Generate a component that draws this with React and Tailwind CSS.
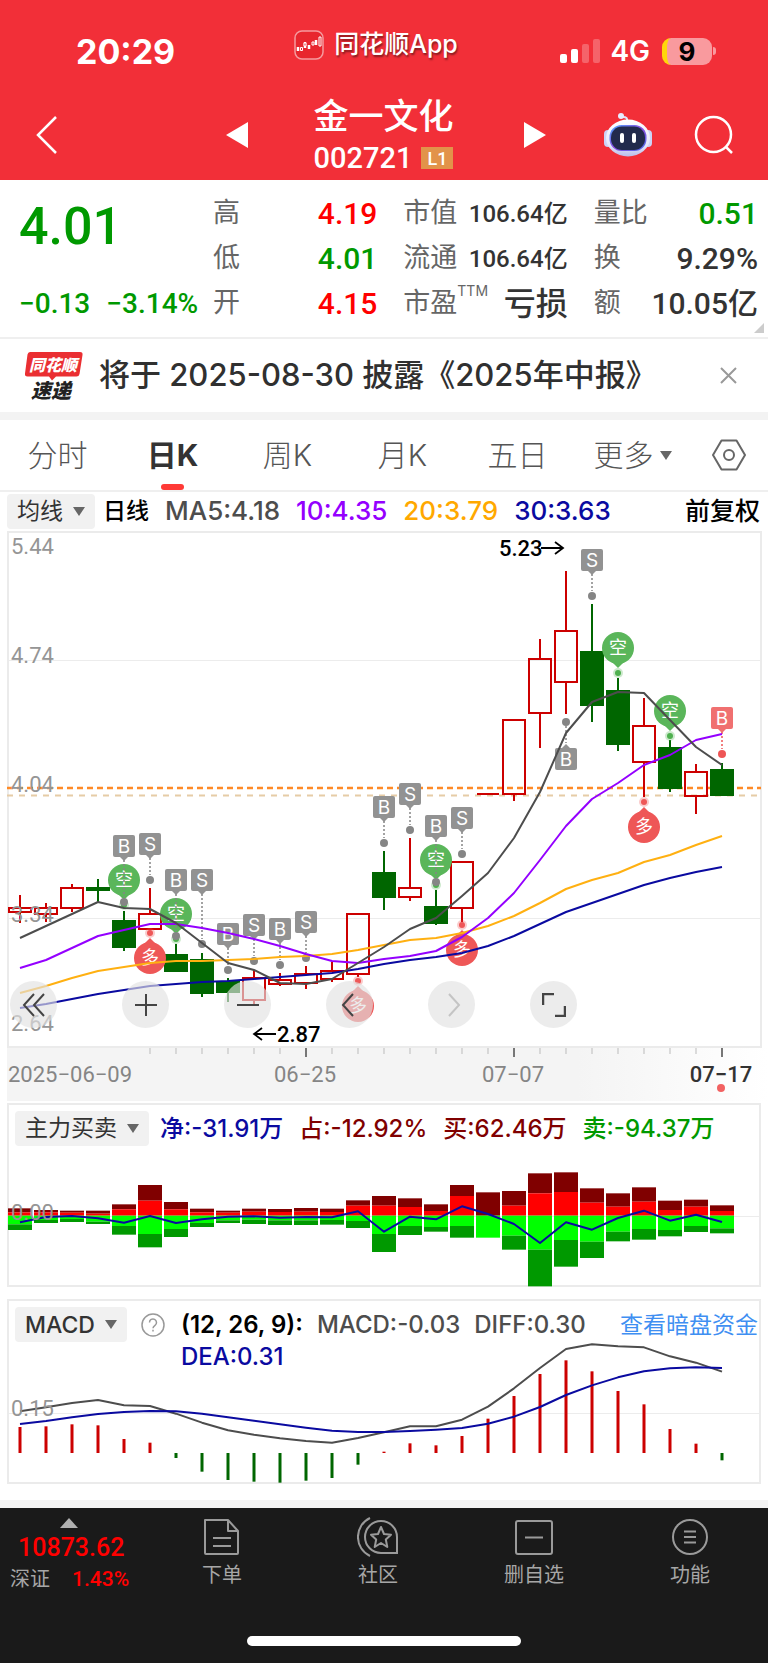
import React from "react";

const X0 = 20;
const STEP = 26;
const cx = (k) => X0 + STEP * k;

const RED = "#cc0000";
const GREEN = "#006600";

// [direction, body top, body bottom, wick top, wick bottom]
const CANDLES = [
  ["up", 908, 912, 895, 923],
  ["up", 908, 914, 903, 922],
  ["up", 888, 908, 884, 912],
  ["down", 887, 891, 879, 902],
  ["down", 920, 948, 911, 951],
  ["up", 914, 929, 888, 929],
  ["down", 954, 972, 944, 972],
  ["down", 959, 994, 953, 997],
  ["down", 981, 993, 978, 1002],
  ["up", 978, 1000, 970, 1005],
  ["up", 980, 984, 973, 986],
  ["up", 974, 983, 966, 989],
  ["up", 971, 979, 962, 982],
  ["up", 914, 974, 914, 977],
  ["down", 872, 898, 851, 910],
  ["up", 888, 897, 838, 901],
  ["down", 906, 924, 890, 925],
  ["up", 862, 908, 862, 922],
  ["flat", 794, 794, 794, 794],
  ["up", 720, 794, 720, 801],
  ["up", 659, 713, 639, 748],
  ["up", 631, 682, 571, 714],
  ["down", 651, 706, 604, 722],
  ["down", 690, 745, 678, 751],
  ["up", 726, 762, 698, 797],
  ["down", 747, 789, 740, 792],
  ["up", 772, 796, 764, 814],
  ["down", 769, 796, 763, 796],
];

const MA5 = [938, 926, 914, 902, 908, 909, 923, 943, 963, 970, 983, 984, 979, 963, 947, 929, 918, 896, 873, 838, 792, 733, 702, 692, 693, 720, 747, 765];
const MA10 = [968, 960, 948, 936, 930, 924, 924, 928, 933, 939, 946, 954, 961, 963, 959, 956, 951, 937, 918, 893, 860, 826, 799, 783, 765, 755, 740, 734];
const MA20 = [993, 986, 978, 971, 967, 963, 961, 961, 960, 959, 957, 956, 954, 950, 945, 940, 938, 933, 926, 916, 903, 889, 880, 873, 862, 855, 845, 836];
const MA30 = [1008, 1004, 999, 994, 990, 986, 984, 982, 981, 979, 977, 975, 973, 969, 964, 960, 957, 953, 946, 936, 924, 912, 903, 894, 885, 878, 872, 867];

// [index, letter, tag top, dot centre]
const TAGS = [
  [4, "B", 835, 902],
  [5, "S", 833, 880],
  [6, "B", 869, 936],
  [7, "S", 869, 944],
  [8, "B", 923, 970],
  [9, "S", 914, 961],
  [10, "B", 918, 965],
  [11, "S", 911, 958],
  [14, "B", 796, 843],
  [15, "S", 783, 830],
  [16, "B", 815, 882],
  [17, "S", 807, 854],
  [22, "S", 549, 596],
  [27, "B", 707, 754],
];
const SHORT_PINS = [[4, 880], [6, 914], [16, 860], [23, 648], [25, 711]];
const LONG_PINS = [[5, 958], [13, 1006], [17, 950], [24, 827]];

// bar edges and net value, in thirds of a pixel
const FLOW = [
  [340, 352, 388, 405, 382], [345, 352, 375, 384, 366], [347, 353, 372, 381, 363], [347, 356, 380, 387, 370],
  [328, 343, 393, 419, 383], [270, 317, 417, 457, 363], [321, 343, 402, 426, 384], [341, 352, 384, 396, 373],
  [347, 353, 376, 384, 365], [341, 350, 374, 387, 364], [342, 351, 376, 390, 368], [339, 350, 376, 390, 366],
  [341, 351, 375, 389, 367], [316, 332, 378, 399, 349], [303, 332, 417, 471, 410], [310, 336, 393, 420, 365],
  [328, 348, 396, 410, 373], [270, 303, 393, 428, 334], [292, 362, 428, 428, 357], [288, 332, 422, 464, 387],
  [235, 295, 464, 574, 444], [232, 291, 435, 515, 382], [280, 323, 440, 489, 404], [295, 335, 410, 439, 369],
  [277, 320, 402, 434, 347], [317, 345, 405, 424, 377], [314, 335, 393, 411, 359], [331, 348, 400, 415, 381],
];
const fy = (v) => 1095 + v / 3;

const MACD = [396, 394, 388, 391, 432, 443, 489, 530, 555, 560, 563, 557, 549, 509, 470, 445, 451, 423, 371, 303, 237, 196, 229, 288, 328, 402, 446, 496];
const DIFF = [349, 337, 324, 315, 331, 333, 356, 383, 406, 419, 430, 438, 443, 429, 412, 394, 394, 374, 335, 280, 219, 162, 148, 154, 157, 184, 203, 230];
const DEA = [387, 378, 367, 357, 351, 348, 349, 356, 367, 377, 388, 398, 407, 411, 411, 408, 404, 399, 386, 365, 336, 300, 271, 247, 229, 220, 217, 219];
const my = (v) => 1295 + v / 3;

const points = (ys) => ys.map((y, k) => `${cx(k)},${y}`).join(" ");

const NUM = "font-['Roboto','Noto_Sans_CJK_SC',sans-serif]";

function Line({ ys, color }) {
  return <polyline points={points(ys)} fill="none" stroke={color} strokeWidth="2" strokeLinejoin="round" />;
}

function Candle({ k, c }) {
  const [dir, top, bottom, high, low] = c;
  const x = cx(k);
  if (dir === "flat") return <path d={`M${x - 11} ${top}h22`} stroke={RED} strokeWidth="2" />;
  if (dir === "down")
    return (
      <g fill={GREEN}>
        <rect x={x - 1} y={high} width="2" height={low - high} />
        <rect x={x - 12} y={top} width="24" height={bottom - top} />
      </g>
    );
  return (
    <g stroke={RED} strokeWidth="2" fill="none">
      <path d={`M${x} ${high}V${top}M${x} ${bottom}V${low}`} />
      <rect x={x - 11} y={top} width="22" height={bottom - top} />
    </g>
  );
}

function Tag({ k, letter, top, dot }) {
  const x = cx(k);
  const hot = k === 27;
  const fill = hot ? "#f07070" : "#929292";
  const ink = hot ? "#ee5555" : "#858585";
  return (
    <g>
      <path d={`M${x} ${top + 25}V${dot - 5}`} stroke={ink} strokeWidth="1.5" strokeDasharray="2 2" />
      <circle cx={x} cy={dot} r="4" fill={ink} />
      <rect x={x - 11} y={top} width="22" height="22" rx="2" fill={fill} />
      <path d={`M${x - 4} ${top + 22}h8l-4 4z`} fill={fill} />
      <text x={x} y={top + 18} textAnchor="middle" fontSize="19" fill="#fff">{letter}</text>
    </g>
  );
}

function ShortPin({ k, y }) {
  const x = cx(k);
  return (
    <g>
      <circle cx={x} cy={y + 25} r="5" fill="#5ab65a" opacity="0.3" />
      <circle cx={x} cy={y + 25} r="3" fill="#4fb04f" />
      <circle cx={x} cy={y} r="16" fill="#5ab65a" />
      <path d={`M${x - 7} ${y + 13}h14l-7 7z`} fill="#5ab65a" />
      <text x={x} y={y + 6} textAnchor="middle" fontSize="18" fill="#fff">空</text>
    </g>
  );
}

function LongPin({ k, y }) {
  const x = cx(k);
  return (
    <g>
      <circle cx={x} cy={y - 25} r="5" fill="#ee5757" opacity="0.3" />
      <circle cx={x} cy={y - 25} r="3" fill="#ee5757" />
      <circle cx={x} cy={y} r="16" fill="#ee5757" />
      <path d={`M${x - 7} ${y - 13}h14l-7 -7z`} fill="#ee5757" />
      <text x={x} y={y + 6} textAnchor="middle" fontSize="18" fill="#fff">多</text>
    </g>
  );
}

function PriceChart() {
  return (
    <svg viewBox="0 530 768 571" className="block w-full font-['Inter','Noto_Sans_CJK_SC',sans-serif]" role="img" aria-label="日K线图">
      <defs>
        <linearGradient id="axis" x1="0" x2="1" y1="0" y2="0">
          <stop offset="0" stopColor="#f4f4f4" />
          <stop offset="0.75" stopColor="#f4f4f4" />
          <stop offset="1" stopColor="#ffffff" />
        </linearGradient>
      </defs>
      <rect x="7" y="1048" width="761" height="53" fill="url(#axis)" />
      <rect x="8" y="532" width="753" height="515" fill="#fff" stroke="#ebebeb" strokeWidth="2" />
      <path d="M9 660.500H760M9 918.500H760" stroke="#ececec" />
      <path d="M7 788H761" stroke="#ff8a26" strokeWidth="2.500" strokeDasharray="6 4" />
      <path d="M7 795.500H761" stroke="#e6cca6" strokeWidth="2" strokeDasharray="6 6" />
      {CANDLES.map((c, k) => <Candle key={k} k={k} c={c} />)}
      {SHORT_PINS.map(([k, y]) => <ShortPin key={k} k={k} y={y} />)}
      {LONG_PINS.map(([k, y]) => <LongPin key={k} k={k} y={y} />)}
      {TAGS.map(([k, letter, top, dot]) => <Tag key={k} k={k} letter={letter} top={top} dot={dot} />)}
      <g>
        <circle cx={cx(21)} cy="722" r="4" fill="#858585" />
        <path d={`M${cx(21)} 726V743`} stroke="#858585" strokeWidth="1.500" strokeDasharray="2 2" />
        <rect x={cx(21) - 11} y="748" width="22" height="22" rx="2" fill="#929292" />
        <path d={`M${cx(21) - 4} 748h8l-4 -4z`} fill="#929292" />
        <text x={cx(21)} y="766" textAnchor="middle" fontSize="19" fill="#fff">B</text>
      </g>
      <Line ys={MA30} color="#0a0aa0" />
      <Line ys={MA20} color="#ffb011" />
      <Line ys={MA10} color="#9400ff" />
      <Line ys={MA5} color="#4d4d4d" />
      <g className={NUM} fontSize="22" fill="#959595">
        <text x="11" y="554">5.44</text>
        <text x="11" y="663">4.74</text>
        <text x="11" y="792">4.04</text>
        <text x="11" y="922">3.34</text>
        <text x="11" y="1031">2.64</text>
      </g>
      <g className={NUM} fontSize="22" fontWeight="500" fill="#000">
        <text x="499" y="556">5.23</text>
        <text x="277" y="1042">2.87</text>
      </g>
      <path d="M541 548h21M555 542l8 6l-8 6M276 1034h-21M262 1028l-8 6l8 6" fill="none" stroke="#000" strokeWidth="1.800" />
      {CANDLES.map((_, k) =>
        k < 5 ? null : (
          <path
            key={k}
            d={`M${cx(k)} 1048v${k % 8 === 3 ? 9 : 6}`}
            stroke={k % 8 === 3 ? "#777" : "#bbb"}
            strokeWidth={k % 8 === 3 ? 2 : 1}
          />
        )
      )}
      <g className={NUM} fontSize="22" fill="#858585">
        <text x="8" y="1082">2025−06−09</text>
        <text x="305" y="1082" textAnchor="middle">06−25</text>
        <text x="513" y="1082" textAnchor="middle">07−07</text>
        <text x="721" y="1082" textAnchor="middle" fill="#333" fontWeight="500">07−17</text>
      </g>
      <circle cx="721" cy="1088" r="4" fill="#f26262" />
    </svg>
  );
}

function FlowChart() {
  return (
    <svg viewBox="9 1105 750 180" className="block w-full overflow-visible [grid-area:1/1]" role="img" aria-label="主力买卖图">
      <path d="M9 1216.500H759" stroke="#ececec" />
      {FLOW.map(([a, b, c, d], k) => (
        <g key={k}>
          <rect x={cx(k) - 12} y={fy(a)} width="24" height={(b - a) / 3} fill="#800000" />
          <rect x={cx(k) - 12} y={fy(b)} width="24" height={(362 - b) / 3} fill="#ff0000" />
          <rect x={cx(k) - 12} y={fy(362)} width="24" height={(c - 362) / 3} fill="#00ff00" />
          <rect x={cx(k) - 12} y={fy(c)} width="24" height={(d - c) / 3} fill="#009900" />
        </g>
      ))}
      <Line ys={FLOW.map((f) => fy(f[4]))} color="#0a0aa0" />
      <text x="11" y="1220" fontSize="22" fill="#959595" className={NUM}>0.00</text>
    </svg>
  );
}

function MacdChart() {
  return (
    <svg viewBox="9 1301 750 181" className="block w-full overflow-visible [grid-area:1/1]" role="img" aria-label="MACD图">
      <path d="M9 1413.500H759" stroke="#ececec" />
      {MACD.map((v, k) => (
        <rect
          key={k}
          x={cx(k) - 1.5}
          y={Math.min(my(v), my(474))}
          width="3"
          height={Math.max(1, Math.abs(v - 474) / 3)}
          fill={v > 474 ? GREEN : RED}
        />
      ))}
      <Line ys={DIFF.map(my)} color="#4d4d4d" />
      <Line ys={DEA.map(my)} color="#0a0aa0" />
      <text x="11" y="1416" fontSize="22" fill="#959595" className={NUM}>0.15</text>
    </svg>
  );
}

function Caret() {
  return (
    <svg width="12" height="9" viewBox="0 0 12 9" aria-hidden="true">
      <path d="M0 0h12l-6 9z" fill="#666" />
    </svg>
  );
}

function Pill({ children }) {
  return (
    <button className="flex h-[35px] shrink-0 items-center gap-[10px] whitespace-nowrap rounded bg-[#f1f1f1] px-[10px] text-[23px] text-[#333]">
      <span>{children}</span>
      <Caret />
    </button>
  );
}

function RoundButton({ label, muted, first, children }) {
  return (
    <button
      aria-label={label}
      className={
        "flex size-[47px] items-center justify-center rounded-full bg-[#e2e2e2]/65 " +
        (first ? "mr-[10px] " : "") +
        (muted ? "text-[#c4c4c4]" : "text-[#444]")
      }
    >
      <svg width="24" height="24" viewBox="0 0 24 24" fill="none" stroke="currentColor" strokeWidth="2">{children}</svg>
    </button>
  );
}

function Stat({ label, sup, value, tone, size }) {
  return (
    <div className="flex items-center justify-between whitespace-nowrap">
      <dt className="text-[27px] text-[#666]">
        {label}
        {sup && <sup className="-top-4 text-[14px]">{sup}</sup>}
      </dt>
      <dd className={`${NUM} ${tone} ${size} font-medium`}>{value}</dd>
    </div>
  );
}

function Robot() {
  return (
    <svg width="48" height="44" viewBox="0 0 48 44" aria-hidden="true">
      <defs>
        <linearGradient id="shell" x1="0" x2="0" y1="0" y2="1">
          <stop offset="0" stopColor="#ffffff" />
          <stop offset="0.700" stopColor="#e4e6fa" />
          <stop offset="1" stopColor="#b9bdea" />
        </linearGradient>
        <linearGradient id="rim" x1="0" x2="1" y1="0" y2="1">
          <stop offset="0" stopColor="#4aa8ff" />
          <stop offset="0.500" stopColor="#8a4be0" />
          <stop offset="1" stopColor="#4b6fe8" />
        </linearGradient>
      </defs>
      <path d="M23 9c1-4-1-5-4-5" fill="none" stroke="#dfe4fb" strokeWidth="2" />
      <circle cx="17" cy="3" r="3" fill="#e8ecff" />
      <rect x="0" y="17" width="8" height="17" rx="4" fill="#ccd2f6" />
      <rect x="40" y="17" width="8" height="17" rx="4" fill="#ccd2f6" />
      <ellipse cx="24" cy="25" rx="22" ry="18.500" fill="url(#shell)" />
      <rect x="5.500" y="12" width="37" height="26" rx="12" fill="url(#rim)" />
      <rect x="7" y="13.500" width="34" height="23.500" rx="11" fill="#222a4c" />
      <rect x="16" y="20" width="4" height="10" rx="2" fill="#fff" />
      <rect x="28" y="20" width="4" height="10" rx="2" fill="#fff" />
    </svg>
  );
}

function NavItem({ label, children }) {
  return (
    <button className="flex flex-col items-center gap-[4px] pt-[9px] text-[20px] leading-7 text-[#a6a6a6]">
      <svg width="42" height="40" viewBox="0 0 42 40" fill="none" stroke="#9a9a9a" strokeWidth="2" aria-hidden="true">{children}</svg>
      <span>{label}</span>
    </button>
  );
}

const TABS = ["分时", "日K", "周K", "月K", "五日", "更多"];

export default function App() {
  return (
    <div className="w-full bg-white font-['Inter','Noto_Sans_CJK_SC',sans-serif]">
      <header className="bg-[#f22f38] text-white">
        <div className="grid h-[90px] grid-cols-3 items-center pt-[12px]">
          <span className="pl-[76px] text-[34px] font-bold">20:29</span>
          <div className="flex items-center justify-center gap-[10px] pb-[12px] pr-[16px]">
            <svg width="30" height="30" viewBox="0 0 30 30" aria-hidden="true">
              <rect x="1" y="1" width="28" height="28" rx="7" fill="#e8262e" stroke="#f59a9e" strokeWidth="1.500" />
              <path d="M4 17v4M11 12v6M15 15v4M22 10v5" stroke="#fff" strokeWidth="2.500" />
              <path d="M6.500 17.500h2v3h-2zM10 13h2v3h-2zM18 12h2v3h-2zM25 7h2v9h-2z" fill="#e8262e" stroke="#fff" strokeWidth="1" />
            </svg>
            <span className="whitespace-nowrap text-[25px] font-medium [text-shadow:1px_2px_2px_rgba(0,0,0,0.45)]">同花顺App</span>
          </div>
          <div className="flex items-center justify-end pr-[52px]">
            <svg width="40" height="26" viewBox="0 0 40 26" fill="#fff" aria-hidden="true">
              <rect x="0" y="16" width="7" height="9" rx="2" />
              <rect x="11" y="11" width="7" height="14" rx="2" />
              <rect x="22" y="6" width="7" height="19" rx="2" opacity="0.250" />
              <rect x="33" y="1" width="7" height="24" rx="2" opacity="0.250" />
            </svg>
            <span className="ml-[10px] mr-[12px] text-[28px] font-semibold">4G</span>
            <span className="flex h-[27px] w-[50px] items-center justify-center rounded-[9px] border-l-[5px] border-[#ffd60a] bg-[#f99a9e] pr-[5px] text-[26px] font-bold leading-[27px] text-black">9</span>
            <span className="ml-px h-2 w-[3px] rounded-r bg-[#f99a9e]" />
          </div>
        </div>
        <div className="grid h-[90px] grid-cols-[1fr_auto_1fr] items-center pl-[4px]">
          <div className="flex items-center justify-between pl-[32px]">
            <button aria-label="返回">
              <svg width="22" height="40" viewBox="0 0 22 40" fill="none" stroke="#fff" strokeWidth="2.500"><path d="M20 2L2 20l18 18" /></svg>
            </button>
            <button aria-label="上一只">
              <svg width="22" height="26" viewBox="0 0 22 26" fill="#fff"><path d="M22 0v26L0 13z" /></svg>
            </button>
          </div>
          <div className="flex flex-col items-center pl-[65px] pr-[70px] pt-[2px]">
            <h1 className="text-[35px] font-medium leading-[44px]">金一文化</h1>
            <div className="flex items-center gap-[9px]">
              <span className={`${NUM} text-[29px] font-medium leading-[40px]`}>002721</span>
              <span className={`${NUM} flex h-[22px] w-[32px] items-center justify-center bg-[#e2934a] text-[18px] font-medium`}>L1</span>
            </div>
          </div>
          <div className="flex items-center justify-between pr-[34px]">
            <button aria-label="下一只">
              <svg width="22" height="26" viewBox="0 0 22 26" fill="#fff"><path d="M0 0v26l22-13z" /></svg>
            </button>
            <button aria-label="智能助手" className="ml-4"><Robot /></button>
            <button aria-label="搜索">
              <svg width="40" height="40" viewBox="0 0 40 40" fill="none" stroke="#fff" strokeWidth="2.500"><circle cx="19.500" cy="19.500" r="17.500" /><path d="M32 32l6 6" /></svg>
            </button>
          </div>
        </div>
      </header>

      <section className="relative flex h-[159px] border-b-2 border-[#efefef] pl-[19px] pr-[10px] pt-[11px]">
        <div className={`${NUM} flex w-[194px] shrink-0 flex-col font-medium text-[#009900]`}>
          <span className="h-[90px] pt-[6px] text-[52px] leading-[60px]">4.01</span>
          <span className="flex h-[45px] items-center gap-4 whitespace-nowrap text-[28px]">
            <span>−0.13</span>
            <span>−3.14%</span>
          </span>
        </div>
        <dl className="grid flex-1 grid-cols-3 grid-rows-[45px_45px_45px] gap-x-[26px]">
          <Stat label="高" value="4.19" tone="text-[#ff0000]" size="text-[30px]" />
          <Stat label="市值" value="106.64亿" tone="text-[#333]" size="text-[24px]" />
          <Stat label="量比" value="0.51" tone="text-[#009900]" size="text-[30px]" />
          <Stat label="低" value="4.01" tone="text-[#009900]" size="text-[30px]" />
          <Stat label="流通" value="106.64亿" tone="text-[#333]" size="text-[24px]" />
          <Stat label="换" value="9.29%" tone="text-[#333]" size="text-[30px]" />
          <Stat label="开" value="4.15" tone="text-[#ff0000]" size="text-[30px]" />
          <Stat label="市盈" sup="TTM" value="亏损" tone="text-[#333]" size="text-[32px]" />
          <Stat label="额" value="10.05亿" tone="text-[#333]" size="text-[30px]" />
        </dl>
        <svg className="absolute bottom-1 right-1" width="10" height="10" viewBox="0 0 10 10" aria-hidden="true"><path d="M10 0v10H0z" fill="#ccc" /></svg>
      </section>

      <section className="flex h-[73px] items-center pl-[24px] pr-[31px]">
        <svg width="60" height="50" viewBox="0 0 60 50" className="shrink-0 overflow-visible" aria-label="同花顺速递" role="img">
          <path d="M6 1h50q3 0 2.500 3l-3 19q-.5 2.500-3 2.500H32l-4 4-3-4H3.500Q.5 25.500 1 22.500L3.500 3.500Q4 1 6 1z" fill="#ea2f32" />
          <text x="29" y="20" textAnchor="middle" fontSize="16" fontWeight="900" fontStyle="italic" fill="#fff">同花顺</text>
          <text x="27" y="47" textAnchor="middle" fontSize="20" fontWeight="900" fontStyle="italic" fill="#222">速递</text>
        </svg>
        <p className="ml-[15px] flex-1 whitespace-nowrap text-[31px] font-medium text-[#303030]">将于 2025-08-30 披露《2025年中报》</p>
        <button aria-label="关闭">
          <svg width="17" height="17" viewBox="0 0 17 17" fill="none" stroke="#999" strokeWidth="2"><path d="M1 1l15 15M16 1L1 16" /></svg>
        </button>
      </section>

      <div className="h-[8px] bg-[#f3f3f3]" />

      <nav className="grid h-[72px] grid-cols-[repeat(6,1fr)_78px] border-b-2 border-[#efefef]">
        {TABS.map((t, i) => (
          <button
            key={t}
            className={
              "relative flex items-center justify-center gap-[6px] whitespace-nowrap text-[30px] " +
              (i === 1 ? "font-bold text-[#333]" : "font-light text-[#555]")
            }
          >
            {t}
            {i === 5 && <Caret />}
            {i === 1 && <span className="absolute bottom-0 h-[6px] w-[23px] rounded-full bg-[#ff3a36]" />}
          </button>
        ))}
        <button aria-label="设置" className="flex items-center justify-center">
          <svg width="34" height="32" viewBox="0 0 34 32" fill="none" stroke="#666" strokeWidth="2"><path d="M9.500 1.500h15L33 16l-8.500 14.500h-15L1 16z" strokeLinejoin="round" /><circle cx="17" cy="16" r="5" /></svg>
        </button>
      </nav>

      <div className="flex h-[38px] items-center gap-[16px] whitespace-nowrap pl-[7px] pr-[8px] text-[26px] font-medium leading-[36px]">
        <div className="mr-[-8px] font-normal"><Pill>均线</Pill></div>
        <span className="text-[23px] text-black">日线</span>
        <span className="text-[#4d4d4d]">MA5:4.18</span>
        <span className="text-[#9400ff]">10:4.35</span>
        <span className="text-[#ffa800]">20:3.79</span>
        <span className="text-[#0a0aa0]">30:3.63</span>
        <span className="ml-auto text-[25px] text-black">前复权</span>
      </div>

      <div className="relative">
        <PriceChart />
        <div className="absolute bottom-[73px] left-[10px] flex gap-[55px]">
          <RoundButton label="最早" first><path d="M12 1L2 12l10 11M22 1L12 12l10 11" /></RoundButton>
          <RoundButton label="放大"><path d="M12 1v22M1 12h22" /></RoundButton>
          <RoundButton label="缩小"><path d="M1 12h22" /></RoundButton>
          <RoundButton label="左移"><path d="M15 1L5 12l10 11" /></RoundButton>
          <RoundButton label="右移" muted><path d="M9 1l10 11L9 23" /></RoundButton>
          <RoundButton label="全屏"><path d="M1 12V1h11M23 13v10H13" strokeWidth="2.500" /></RoundButton>
        </div>
      </div>

      <section className="mx-[7px] mt-[2px] grid border-2 border-[#ebebeb]">
        <FlowChart />
        <div className="flex items-start self-start whitespace-nowrap pl-[6px] pt-[6px] text-[24px] font-medium leading-[35px] [grid-area:1/1]">
          <div className="mr-[11px] font-normal"><Pill>主力买卖</Pill></div>
          <div className="flex gap-[16px]">
            <span className="text-[#0a0aa0]">净:-31.91万</span>
            <span className="text-[#800000]">占:-12.92%</span>
            <span className="text-[#800000]">买:62.46万</span>
            <span className="text-[#009900]">卖:-94.37万</span>
          </div>
        </div>
      </section>

      <section className="mx-[7px] mt-[12px] grid border-2 border-[#ebebeb]">
        <MacdChart />
        <div className="flex items-start self-start pl-[6px] pr-px pt-[6px] text-[24px] font-medium leading-[32px] [grid-area:1/1]">
          <Pill>MACD</Pill>
          <button aria-label="帮助" className="ml-[14px] mt-[6px]">
            <svg width="24" height="24" viewBox="0 0 24 24" fill="none" stroke="#999" strokeWidth="1.500">
              <circle cx="12" cy="12" r="11" />
              <path d="M8.500 9.500a3.500 3.500 0 1 1 5.500 2.800c-1.500 1-2 1.500-2 3M12 16.800v1.700" />
            </svg>
          </button>
          <div className="ml-[16px] flex flex-1 flex-wrap gap-x-[14px] whitespace-nowrap pt-[2px]">
            <span className="font-semibold text-black">(12, 26, 9):</span>
            <span className="text-[#4d4d4d]">MACD:-0.03</span>
            <span className="text-[#4d4d4d]">DIFF:0.30</span>
            <span className="basis-full text-[#0a0aa0]">DEA:0.31</span>
          </div>
          <a href="#funds" className="whitespace-nowrap pt-[2px] text-[23px] font-normal text-[#3f8ff2]">查看暗盘资金</a>
        </div>
      </section>

      <div className="mt-[16px] h-[8px] bg-[#f4f4f4]" />

      <footer className="bg-[#1a1a1a] pb-[17px]">
        <div className="grid h-[128px] grid-cols-[144px_repeat(4,1fr)] items-start">
          <button className={`${NUM} flex flex-col pl-[10px] pt-[10px] text-left text-[#ff0000]`}>
            <svg width="18" height="10" viewBox="0 0 18 10" className="ml-[50px]" aria-hidden="true"><path d="M9 0l9 10H0z" fill="#b0b0b0" /></svg>
            <span className="ml-[8px] mt-[3px] text-[25px] font-medium leading-[34px]">10873.62</span>
            <span className="flex items-center gap-[22px] text-[21px] leading-[28px]">
              <span className="text-[20px] text-[#a6a6a6]">深证</span>
              <span className="font-medium">1.43%</span>
            </span>
          </button>
          <NavItem label="下单">
            <path d="M4 3h23l10 11v22q0 1-1 1H5q-1 0-1-1z M27 3v11h10M12 21h18M12 29h18" strokeLinejoin="round" />
          </NavItem>
          <NavItem label="社区">
            <path d="M24 4a16 16 0 0 0 0 32h16V20A16 16 0 0 0 24 4zM13 1a21 21 0 0 0 0 38" />
            <path d="M24 10l3 7 7 .700-5.200 4.800L30.300 30 24 26l-6.300 4 1.500-7.500L14 17.700l7-.700z" strokeLinejoin="round" />
          </NavItem>
          <NavItem label="删自选">
            <rect x="3" y="4" width="36" height="33" rx="2" />
            <path d="M12 20.500h18" />
          </NavItem>
          <NavItem label="功能">
            <circle cx="21" cy="20" r="17" />
            <path d="M15 14.500h12M15 20h12M15 25.500h12" />
          </NavItem>
        </div>
        <div className="mx-auto h-[10px] w-[274px] rounded-full bg-white" />
      </footer>
    </div>
  );
}
